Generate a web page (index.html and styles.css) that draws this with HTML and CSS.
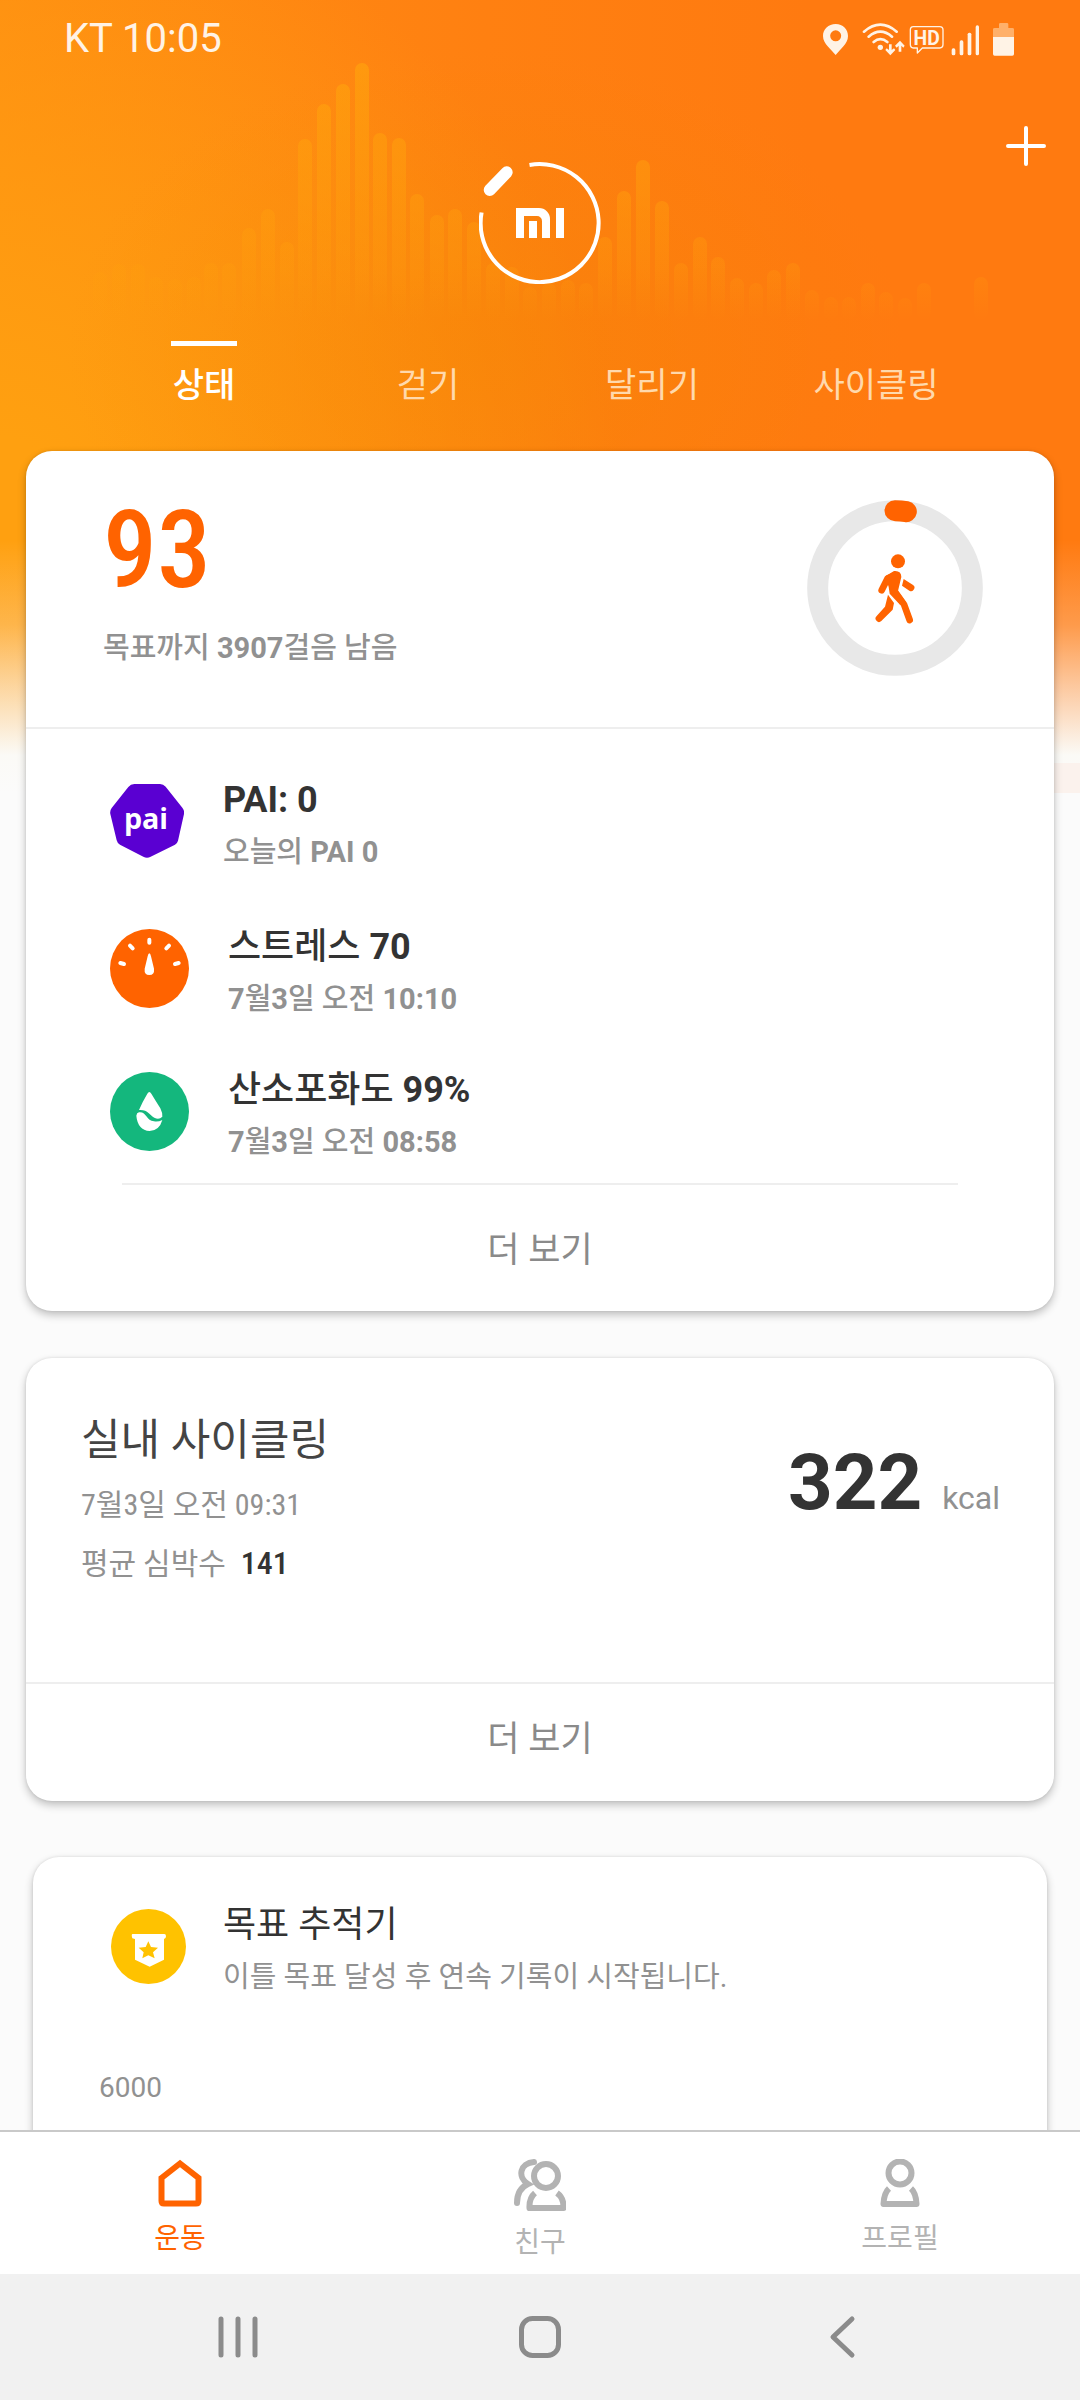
FILE: index.html
```html
<!DOCTYPE html>
<html lang="ko">
<head>
<meta charset="utf-8">
<meta name="viewport" content="width=device-width, initial-scale=1">
<title>운동</title>
<link rel="stylesheet" href="styles.css">
</head>
<body>
<div class="app">
  <div class="feed">
    <div class="backdrop" aria-hidden="true">
      <svg class="wave" viewBox="0 0 1080 330">
        <defs>
          <linearGradient id="bar" gradientUnits="userSpaceOnUse" x1="0" y1="60" x2="0" y2="320">
            <stop offset="0" stop-color="#ffa80c" stop-opacity=".55"/>
            <stop offset=".5" stop-color="#ffa00c" stop-opacity=".45"/>
            <stop offset=".8" stop-color="#ffa00c" stop-opacity=".25"/>
            <stop offset="1" stop-color="#ffa00c" stop-opacity="0"/>
          </linearGradient>
        </defs>
        <path fill="none" stroke="url(#bar)" stroke-width="14" stroke-linecap="round" d="M100 279V313M119 271V313M138 271V313M156 284V313M175 286V313M194 284V313M211 270V313M229 270V313M249 235V313M268 216V313M287 249V313M305 146V313M324 111V313M343 91V313M362 70V313M380 140V313M399 145V313M417 201V313M437 222V313M455 216V313M474 229V313M493 270V313M512 274V313M530 294V313M549 290V313M568 287V313M586 290V313M605 244V313M624 198V313M643 167V313M662 208V313M681 270V313M700 244V313M718 264V313M737 285V313M756 290V313M774 277V313M793 270V313M812 297V313M831 304V313M849 304V313M868 290V313M886 299V313M905 305V313M924 290V313M981 284V313"/>
      </svg>
    </div>

    <header class="header">
      <div class="status">
        <span class="clock">KT 10:05</span>
        <svg class="status-icons" viewBox="120 60 591 105" role="img" aria-label="위치, Wi-Fi, HD, 신호, 배터리">
          <g fill="#fff3e6">
            <path fill-rule="evenodd" d="M167 66c22 0 37 15 37 36 0 24-24 40-37 57-13-17-38-33-38-57 0-21 16-36 38-36zm0 19a16 16 0 1 0 0 33 16 16 0 0 0 0-33z"/>
            <circle cx="301" cy="136" r="8"/>
            <path d="M327 127h8v17l7-5 4 5-15 16-15-16 4-5 7 5zM356 149h8v-18l6 6 4-6-14-15-15 15 5 6 6-6z"/>
            <rect x="515" y="139" width="11" height="21" rx="5"/><rect x="539" y="115" width="11" height="45" rx="5"/><rect x="563" y="92" width="11" height="68" rx="5"/><rect x="587" y="70" width="10" height="90" rx="5"/>
            <path d="M639 105h63v51q0 5-5 5h-53q-5 0-5-5z"/>
          </g>
          <path fill="#ffb06a" d="M639 105V82q0-4 5-4h13V67q0-4 4-4h20q4 0 4 4v11h12q5 0 5 4v23z"/>
          <g fill="none" stroke="#fff3e6" stroke-width="8" stroke-linecap="round">
            <path d="M252 89q49-42 98 0M266 104q35-30 70 0M281 120q20-17 41 0"/>
            <path stroke-width="4" stroke-linejoin="round" d="M400 74h79q10 0 10 10v43q0 11-10 11h-52l-15 15v-15h-12q-9 0-9-11V84q0-10 9-10z"/>
          </g>
          <text class="hd" x="440" y="130" text-anchor="middle">HD</text>
        </svg>
      </div>
      <div class="toolbar">
        <button class="add" type="button" aria-label="추가">
          <svg viewBox="0 0 40 40"><path d="M20 2v36M2 20h36"/></svg>
        </button>
      </div>
      <svg class="logo" viewBox="0 0 122 122" role="img" aria-label="MI">
        <path class="logo-ring" d="M50.5 3A59 59 0 1 1 2.6 50.5"/>
        <path class="logo-pill" d="M27.7 10.3L10.7 28"/>
        <path fill="#fff" d="M37 46H60a11 11 0 0 1 11 11V76H63V59a5 5 0 0 0-5-5H45V76H37ZM50 59h8v17h-8zM77 46h8v30h-8z"/>
      </svg>
      <nav class="tabs">
        <a class="tab current" href="#status">상태</a>
        <a class="tab" href="#walk">걷기</a>
        <a class="tab" href="#run">달리기</a>
        <a class="tab" href="#cycle">사이클링</a>
      </nav>
    </header>

    <main class="cards">
      <section class="card summary">
        <div class="steps">
          <div>
            <p class="steps-count">93</p>
            <p class="caption strong">목표까지 <b>3907</b>걸음 남음</p>
          </div>
          <svg class="ring" viewBox="81 89 528 528" role="img" aria-label="걷기">
            <circle cx="345" cy="353" r="232" fill="none" stroke="#e8e8e8" stroke-width="63"/>
            <path d="M345 121q18 0 34 3" fill="none" stroke="#ff6300" stroke-width="63" stroke-linecap="round"/>
            <g fill="#ff6300">
              <circle cx="354" cy="273" r="21"/>
              <path d="M316 318L342 302Q364 300 364 320L354 362L378 396L360 403L329 370L326 350Z"/>
              <path d="M371 326L398 343a9.5 9.5 0 0 1-10 18L366 346Z"/>
              <path d="M324 373L342 398L338 418L304 452a10 10 0 0 1-14-15L315 409Z"/>
            </g>
            <path d="M305 360L323 324L344 316M343 362L372 402L389 449" fill="none" stroke="#ff6300" stroke-width="20" stroke-linecap="round" stroke-linejoin="round"/>
          </svg>
        </div>
        <ul class="metrics">
          <li class="metric pai">
            <svg class="icon-pai" viewBox="90 132 222 222" aria-hidden="true">
              <path fill="#5a00d2" d="M163 132h77q10 0 17 8l50 63q7 9 5 19l-18 80q-2 8-9 12l-73 36q-11 6-22 0l-70-36q-8-4-10-13L91 222q-2-10 4-18l50-63q7-9 18-9z"/>
              <text class="pai-mark" x="198" y="266" text-anchor="middle">pai</text>
            </svg>
            <div class="metric-text">
              <h2 class="title strong"><b>PAI: 0</b></h2>
              <p class="caption strong">오늘의 <b>PAI 0</b></p>
            </div>
          </li>
          <li class="metric">
            <svg class="icon" viewBox="90 567 237 237" aria-hidden="true">
              <circle cx="208.500" cy="685.500" r="118.500" fill="#ff6300"/>
              <path d="M208 599v9M150 617l8 8M267 617l-8 8M121 669l11 3M296 669l-11 3" fill="none" stroke="#fff" stroke-width="12" stroke-linecap="round"/>
              <path fill="#fff" d="M208 640q3 0 5 9l9 37q2 19-14 19t-14-19l9-37q2-9 5-9z"/>
            </svg>
            <div class="metric-text">
              <h2 class="title strong">스트레스 <b>70</b></h2>
              <p class="caption strong"><b>7</b>월<b>3</b>일 오전 <b>10:10</b></p>
            </div>
          </li>
          <li class="metric">
            <svg class="icon" viewBox="90 996 237 237" aria-hidden="true">
              <circle cx="208.500" cy="1114.500" r="118.500" fill="#14b77d"/>
              <path fill="#fff" d="M208 1056q3 0 6 5 14 23 27 44 7 14 6 25-10 10-24 3c-14-8-20-25-46-23q10-24 25-49 3-5 6-5zM169 1127q1-9 8-10c22-3 22 25 45 27q13 2 25-4-9 32-38 33-36-3-40-46z"/>
            </svg>
            <div class="metric-text">
              <h2 class="title strong">산소포화도 <b>99%</b></h2>
              <p class="caption strong"><b>7</b>월<b>3</b>일 오전 <b>08:58</b></p>
            </div>
          </li>
        </ul>
        <a class="more inset" href="#more-status">더 보기</a>
      </section>

      <section class="card workout">
        <div class="session">
          <div>
            <h2 class="session-title">실내 사이클링</h2>
            <p class="session-date">7월3일 오전 09:31</p>
            <p class="session-rate">평균 심박수 <b class="rate">141</b></p>
          </div>
          <p class="energy"><b class="energy-value">322</b><span class="energy-unit">kcal</span></p>
        </div>
        <a class="more ruled" href="#more-workout">더 보기</a>
      </section>

      <section class="card goals">
        <div class="goal">
          <svg class="icon-goal" viewBox="93 147 225 225" aria-hidden="true">
            <circle cx="205.500" cy="259.500" r="112.500" fill="#ffc200"/>
            <path fill="#fff" d="M158 222h95q5 0 5 7t-6 8v62l-43 21-44-21v-62l-8-2q-4-13 1-13z"/>
            <path fill="#ffc200" d="M205 244l8 17 21 2-15 14 5 18-19-9-18 9 4-18-15-14 21-2z"/>
          </svg>
          <div class="metric-text">
            <h2 class="title">목표 추적기</h2>
            <p class="caption">이틀 목표 달성 후 연속 기록이 시작됩니다.</p>
          </div>
        </div>
        <p class="axis">6000</p>
      </section>
    </main>
  </div>

  <nav class="bottom">
    <a class="dest current" href="#workout">
      <svg viewBox="0 0 44 48" class="home"><path d="M3.500 19L22 4.500L40.500 19V42q0 2.500-2.500 2.500H6q-2.500 0-2.500-2.500z" fill="none" stroke="#ff6300" stroke-width="6"/></svg>
      운동
    </a>
    <a class="dest" href="#friends">
      <svg viewBox="0 0 52 52" class="friends"><g fill="none" stroke="#b3b3b3" stroke-width="6"><circle cx="32" cy="17" r="12" /><path stroke-linejoin="round" d="M21 34q-6 5-5.500 15H49.500Q50 39 43 34"/><path stroke-linecap="round" d="M20 3C6 4 3 18 14 25Q3 30 3 44"/></g></svg>
      친구
    </a>
    <a class="dest" href="#profile">
      <svg viewBox="0 0 40 48" class="profile"><g fill="none" stroke="#b3b3b3" stroke-width="6"><circle cx="20" cy="14" r="11.500"/><path stroke-linejoin="round" d="M9 29.500Q4 34 3.500 45H36.500Q36 34 31 29.500"/></g></svg>
      프로필
    </a>
  </nav>

  <div class="system">
    <button type="button" class="key" aria-label="최근 앱"><svg viewBox="0 0 44 44"><path stroke-width="5" d="M5 4v36M22 4v36M39 4v36"/></svg></button>
    <button type="button" class="key" aria-label="홈"><svg viewBox="0 0 44 44"><rect x="3.500" y="3.500" width="37" height="37" rx="11" stroke-width="5"/></svg></button>
    <button type="button" class="key" aria-label="뒤로"><svg viewBox="0 0 44 44"><path stroke-width="5" stroke-linejoin="round" d="M32 4L13 22L32 40"/></svg></button>
  </div>
</div>
</body>
</html>
```
FILE: styles.css
```css
* {
  box-sizing: border-box;
}

body,
h2,
p,
ul {
  margin: 0;
  padding: 0;
}

body {
  font-family: Roboto, "Noto Sans CJK KR", sans-serif;
  color: #333;
  background: #fbfbfb;
}

a {
  color: inherit;
  text-decoration: none;
}

button {
  padding: 0;
  border: 0;
  background: none;
}

svg {
  display: block;
  flex: none;
}

.app {
  display: flex;
  flex-direction: column;
  height: 100vh;
}

.feed {
  position: relative;
  flex: 1;
  min-height: 0;
  overflow: hidden;
}

/* Orange artwork that lies behind the header and the first card */
.backdrop {
  position: absolute;
  inset: 0 0 auto;
  height: 793px;
  background:
    linear-gradient(#fbf2ed, #fbf2ed) right bottom / 26px 30px no-repeat,
    linear-gradient(to bottom, rgba(251, 251, 251, 0) 540px, rgba(251, 251, 251, .25) 625px, rgba(251, 251, 251, .6) 685px, #fbfaf6 755px, #fbfbfb 793px),
    radial-gradient(ellipse 420px 300px at 45% 350px, rgba(240, 135, 0, .4), rgba(240, 135, 0, 0)),
    radial-gradient(ellipse 620px 620px at 0 500px, #ffa010 10%, rgba(255, 160, 16, 0)),
    linear-gradient(to right, #ff8f12, #ff8011 45%, #ff7a10 75%);
}

.wave {
  width: 100%;
}

.header {
  position: relative;
  display: flex;
  flex-direction: column;
  align-items: center;
  color: #fff;
}

.status {
  display: flex;
  align-items: center;
  justify-content: space-between;
  width: 100%;
  height: 78px;
  padding: 0 63px 0 64px;
}

.clock {
  font-size: 40px;
  line-height: 44px;
  color: #fff3e6;
}

.status-icons {
  width: 197px;
  height: 35px;
}

.hd {
  font: 700 58px Roboto, sans-serif;
  fill: #fff3e6;
}

.toolbar {
  display: flex;
  justify-content: flex-end;
  width: 100%;
  height: 84px;
  padding: 48px 34px 0;
}

.add {
  width: 40px;
  height: 40px;
}

.add path {
  fill: none;
  stroke: #fff;
  stroke-width: 4;
  stroke-linecap: round;
}

.logo {
  width: 122px;
  height: 122px;
}

.logo-ring {
  fill: none;
  stroke: #fff;
  stroke-width: 4;
}

.logo-pill {
  stroke: #fff;
  stroke-width: 12;
  stroke-linecap: round;
}

.tabs {
  display: grid;
  grid-template-columns: repeat(4, 1fr);
  width: 100%;
  padding: 57px 92px 0;
}

.tab {
  display: flex;
  flex-direction: column;
  align-items: center;
  gap: 15px;
  font-size: 34px;
  line-height: 48px;
  color: #ffd9ac;
}

.tab::before {
  content: "";
  width: 66px;
  height: 5px;
}

.tab.current {
  font-weight: 500;
  color: #fff;
}

.tab.current::before {
  background: #fff;
}

.cards {
  position: relative;
  display: flex;
  flex-direction: column;
  padding: 42px 26px 0;
}

.card {
  border-radius: 26px;
  background: #fff;
  box-shadow: 0 4px 8px rgba(0, 0, 0, .24), 0 0 3px rgba(0, 0, 0, .1);
}

.steps {
  display: flex;
  align-items: flex-start;
  justify-content: space-between;
  height: 278px;
  padding: 49px 71px 0 77px;
  border-bottom: 2px solid #eee;
}

.steps-count {
  font-family: "Liberation Sans Narrow", "Roboto Condensed", Roboto, sans-serif;
  font-size: 108px;
  font-weight: 500;
  line-height: 100px;
  color: #ff6300;
}

.ring {
  width: 176px;
  height: 176px;
}

.title {
  font-size: 36px;
  font-weight: 400;
  line-height: 52px;
}

.caption {
  font-size: 29px;
  line-height: 52px;
  color: #919191;
}

.title.strong,
.caption.strong {
  font-weight: 500;
}

.strong b {
  font-weight: 700;
}

.steps .caption {
  margin-top: 22px;
}

.metrics {
  display: flex;
  flex-direction: column;
  gap: 39px;
  padding: 40px 84px 20px;
  list-style: none;
}

.metric {
  display: flex;
  align-items: center;
  gap: 39px;
  height: 104px;
}

.metric.pai {
  margin-bottom: 4px;
}

.metric-text {
  padding-top: 10px;
}

.icon {
  width: 79px;
  height: 79px;
}

.icon-pai {
  width: 74px;
  height: 74px;
}

.pai-mark {
  font: 700 86px "Open Sans", sans-serif;
  fill: #fff;
}

.more {
  display: flex;
  align-items: center;
  justify-content: center;
  height: 119px;
  font-size: 35px;
  line-height: 52px;
  color: #8a8a8a;
}

.more.inset {
  height: 128px;
  margin: 0 96px;
  padding-top: 6px;
  border-top: 2px solid #eee;
}

.more.ruled {
  padding-bottom: 6px;
  border-top: 2px solid #eee;
}

.workout {
  margin-top: 47px;
}

.session {
  display: flex;
  align-items: flex-start;
  justify-content: space-between;
  height: 324px;
  padding: 50px 54px 0 55px;
}

.session-title {
  margin-bottom: 4px;
  font-size: 43px;
  font-weight: 400;
  line-height: 64px;
  color: #444;
}

.session-date,
.session-rate {
  font-family: "Liberation Sans Narrow", "Roboto Condensed", "Noto Sans CJK KR", sans-serif;
  font-size: 30px;
  line-height: 58px;
  color: #919191;
}

.rate {
  margin-left: 8px;
  font-size: 32px;
  font-weight: 500;
  color: #333;
}

.energy {
  display: flex;
  align-items: baseline;
  gap: 20px;
  padding-top: 28px;
}

.energy-value {
  font-size: 78px;
  line-height: 94px;
}

.energy-unit {
  font-size: 32px;
  color: #919191;
}

.goals {
  height: 500px;
  margin: 56px 7px 0;
  padding: 37px 66px 0;
}

.goal {
  display: flex;
  align-items: center;
  gap: 37px;
  height: 104px;
  padding-left: 12px;
}

.icon-goal {
  width: 75px;
  height: 75px;
}

.axis {
  margin-top: 73px;
  font-size: 28px;
  line-height: 34px;
  color: #919191;
}

.bottom {
  position: relative;
  display: grid;
  grid-template-columns: repeat(3, 1fr);
  height: 144px;
  padding-top: 27px;
  border-top: 2px solid #c9c9c9;
  background: #fff;
}

.dest {
  display: flex;
  flex-direction: column;
  align-items: center;
  gap: 12px;
  font-size: 28px;
  line-height: 40px;
  color: #b3b3b3;
}

.dest.current {
  color: #ff6300;
}

.home {
  width: 44px;
  height: 48px;
}

.friends {
  width: 52px;
  height: 52px;
}

.profile {
  width: 40px;
  height: 48px;
}

.system {
  display: flex;
  align-items: center;
  justify-content: space-around;
  height: 126px;
  padding: 0 87px;
  background: #f1f1f1;
}

.key svg {
  width: 44px;
  height: 44px;
  fill: none;
  stroke: #8b8b8b;
  stroke-linecap: round;
}
```
